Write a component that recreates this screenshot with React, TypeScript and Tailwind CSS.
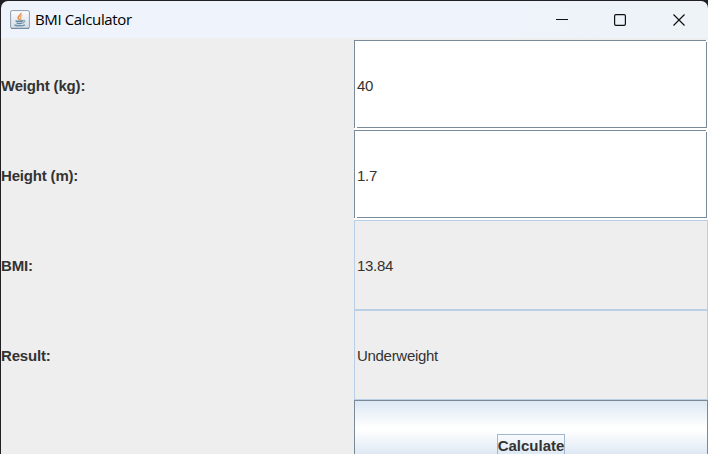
import React from "react";

function JavaIcon() {
  return (
    <svg width="20" height="20" viewBox="0 0 20 20" className="shrink-0">
      <defs>
        <linearGradient id="tile" x1="0" y1="0" x2="0" y2="1">
          <stop offset="0" stopColor="#fdfdfd" />
          <stop offset="1" stopColor="#d3dbe2" />
        </linearGradient>
      </defs>
      <rect x="0.6" y="0.6" width="18.8" height="17.8" rx="1.5" fill="url(#tile)" stroke="#8a9daf" />
      <path d="M1 18.4h18" stroke="#6f88a0" strokeWidth="1" />
      <path d="M10.8 3c1 2-3.4 3-2.6 4.900.3 1 1.300 1.500 1.300 2.300" fill="none" stroke="#e88f48" strokeWidth="1.700" />
      <path d="M12.300 5.500c-2.500 1.200-2 2-1.400 3 .4.700 0 1.300-.5 1.800" fill="none" stroke="#eda56a" strokeWidth="1.300" />
      <path d="M5.500 10.800c1.500.8 6 .7 7.800 0M6.500 12.900c1.700.6 4.500.6 6 0" fill="none" stroke="#6389a6" strokeWidth="1.500" />
      <path d="M13.300 10.500c2.400-.7 2.200 1.800-.3 2.500" fill="none" stroke="#6389a6" strokeWidth="0.900" />
      <path d="M4.500 15c2.500 1.200 8.500 1.100 10.500-.2" fill="none" stroke="#7296b1" strokeWidth="1.500" />
    </svg>
  );
}

function TitleBar() {
  return (
    <header className="flex h-[37px] items-center rounded-tl-[7px] rounded-tr-[7px] bg-gradient-to-r from-[#eff3fb] from-70% to-[#edf3f7] pl-[9px]">
      <JavaIcon />
      <h1 className="ml-[5px] pb-[2px] font-['Open_Sans','Noto_Sans',sans-serif] text-[15px] leading-5 tracking-[-0.37px] text-black">
        BMI Calculator
      </h1>
      <svg width="130" height="14" viewBox="0 0 130 14" className="ml-auto mr-[22px]" fill="none" stroke="#111">
        <path d="M0 6.500h12" strokeWidth="1" />
        <rect x="58.600" y="1.600" width="10.800" height="10.800" rx="1.300" strokeWidth="1.200" />
        <path d="M117.500 1.500l11 11M128.500 1.500l-11 11" strokeWidth="1.200" />
      </svg>
    </header>
  );
}

function Label({ children }: { children?: React.ReactNode }) {
  return (
    <div className="flex h-[90px] items-center pt-[2px] font-bold tracking-[-0.18px]">{children}</div>
  );
}

function EditableField({ value }: { value: string }) {
  return (
    <div className="relative flex h-[90px] items-center bg-white pl-[3px] pt-[2px] tracking-[-0.3px]">
      <span className="absolute left-0 top-0 h-px w-[352px] bg-[#7a8a99]" />
      <span className="absolute left-0 top-0 h-[88px] w-px bg-[#7a8a99]" />
      <span className="absolute left-[3px] top-[87px] h-px w-[350px] bg-[#7a8a99]" />
      <span className="absolute right-px top-[2px] h-[86px] w-px bg-[#7a8a99]" />
      {value}
    </div>
  );
}

function ReadOnlyField({ value }: { value: string }) {
  return (
    <div className="flex h-[90px] items-center border border-[#b8cfe5] pl-[2px] pt-[2px] tracking-[-0.3px]">
      {value}
    </div>
  );
}

export default function App() {
  return (
    <div className="h-[454px] w-[708px] overflow-hidden bg-[#202024] pl-px pt-px">
      <TitleBar />
      <main className="grid grid-cols-[353px_354px] bg-[#eeeeee] pt-[2px] font-['Liberation_Sans',Arial,sans-serif] text-[15px] leading-[18px] text-[#333333]">
        <Label>Weight (kg):</Label>
        <EditableField value="40" />
        <Label>Height (m):</Label>
        <EditableField value="1.7" />
        <Label>BMI:</Label>
        <ReadOnlyField value="13.84" />
        <Label>Result:</Label>
        <ReadOnlyField value="Underweight" />
        <Label />
        <button className="flex h-[90px] items-center justify-center border border-[#7a8a99] bg-[linear-gradient(to_bottom,#dde8f3_0px,#ffffff_27px,#ffffff_29px,#dde8f3_54px,#b8cfe5_88px)] pt-[2px] font-bold">
          <span className="flex h-[24px] w-[68px] items-center justify-center border border-[#a3b8cc]">Calculate</span>
        </button>
      </main>
    </div>
  );
}
